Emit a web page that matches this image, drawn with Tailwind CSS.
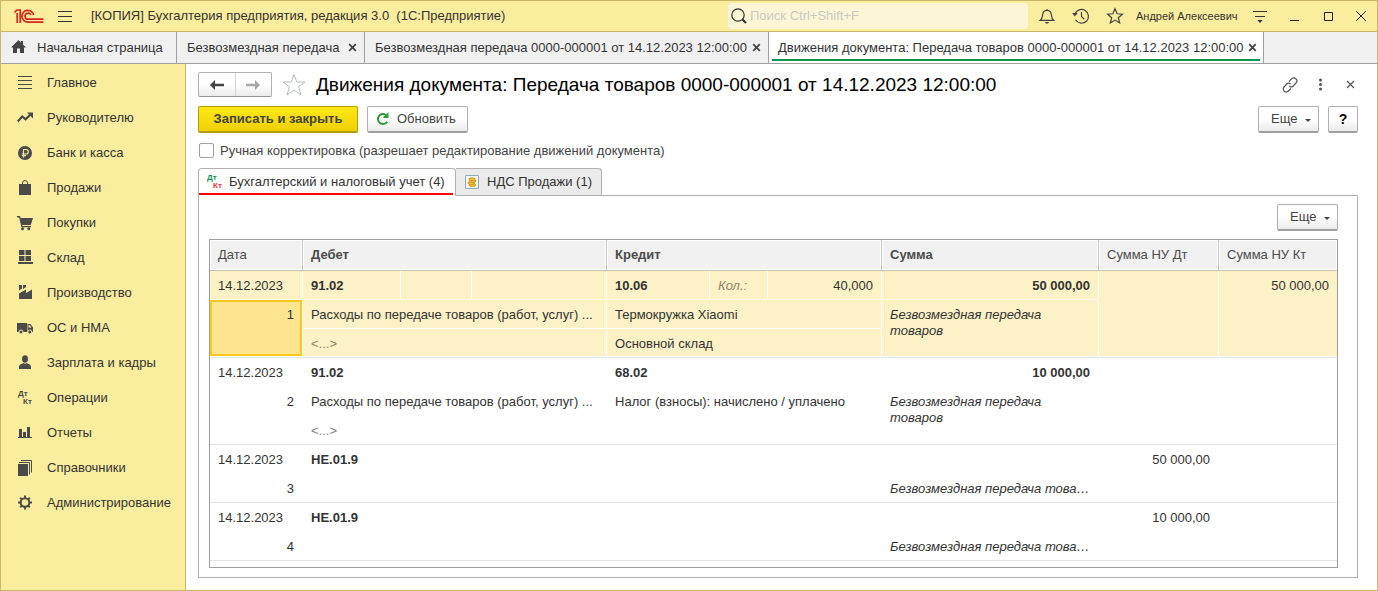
<!DOCTYPE html>
<html lang="ru">
<head>
<meta charset="utf-8">
<title>Движения документа</title>
<script src="https://cdn.jsdelivr.net/npm/@tailwindcss/browser@4"></script>
</head>
<body class="min-h-screen flex flex-col bg-white border border-[#c9b765] text-[13px] leading-4 text-[#333333]" style="font-family:'Liberation Sans',Arial,sans-serif">

<header class="flex items-center h-[31px] bg-[#fbed9e] border-b border-[#c9b765]">
  <svg class="ml-3 w-[31px] h-4 shrink-0" viewBox="0 0 31 16" fill="none" stroke="#d9251d" stroke-width="1.7" aria-label="1С">
    <path d="M1.5 4.4L4 2H7.2V15M4.2 15V5"/>
    <path d="M20.6 7A5.9 5.9 0 1 0 15 14.1H30.5"/>
    <path d="M17.8 7A3 3 0 1 0 15 11.2H30.5"/>
  </svg>
  <button class="ml-[13px] w-4 h-4 shrink-0" aria-label="Меню">
    <svg class="w-4 h-4" viewBox="0 0 16 16" fill="none" stroke="#333"><path d="M1 3.5H15M1 8.5H15M1 13.5H15"/></svg>
  </button>
  <div class="ml-[18px] whitespace-nowrap">[КОПИЯ] Бухгалтерия предприятия, редакция 3.0&nbsp; (1С:Предприятие)</div>
  <label class="ml-auto w-[300px] h-[26px] flex items-center gap-[2px] pl-[2px] bg-[#fdf6d6] rounded-sm">
    <svg class="w-[18px] h-[18px] shrink-0" viewBox="0 0 18 18" fill="none" stroke="#333"><circle cx="8" cy="8" r="6.2" stroke-width="1.2"/><path d="M12.5 12.5L16 16" stroke-width="2.2"/></svg>
    <input type="text" aria-label="Поиск" placeholder="Поиск Ctrl+Shift+F" class="flex-1 min-w-0 bg-transparent outline-none text-[13px] placeholder:text-[#c9c8c4]">
  </label>
  <button class="ml-[2px] w-[34px] h-[30px] flex items-center justify-center" aria-label="Уведомления">
    <svg class="w-[18px] h-[18px]" viewBox="0 0 18 18" fill="none" stroke="#444" stroke-width="1.2"><path d="M9 2V3.2M2.2 13.4H15.8C13.6 11.6 13.6 9.8 13.3 7.4C13 4.8 11.2 3.4 9 3.4S5 4.8 4.7 7.4C4.4 9.8 4.4 11.6 2.2 13.4Z"/><path d="M6.8 15H11.2L10 16.6H8Z" fill="#444" stroke="none"/></svg>
  </button>
  <button class="w-[34px] h-[30px] flex items-center justify-center" aria-label="История">
    <svg class="w-[18px] h-[18px]" viewBox="0 0 18 18" fill="none" stroke="#444" stroke-width="1.2"><path d="M3 7.2A6.9 6.9 0 1 1 3.6 12.8"/><path d="M9.5 5V9.6L12.3 12.3"/><path d="M.2 6L5.8 6L2.8 9.4Z" fill="#444" stroke="none"/></svg>
  </button>
  <button class="w-[34px] h-[30px] flex items-center justify-center" aria-label="Избранное">
    <svg class="w-[18px] h-[18px]" viewBox="0 0 18 18" fill="none" stroke="#444" stroke-width="1.2"><path d="M9 1.6L11.1 6.8L16.4 7.2L12.3 10.7L13.7 16L9 13.1L4.3 16L5.7 10.7L1.6 7.2L6.9 6.8Z"/></svg>
  </button>
  <span class="ml-1 w-[107px] text-[11px] whitespace-nowrap">Андрей Алексеевич</span>
  <button class="w-[34px] h-[30px] flex items-center justify-center" aria-label="Настройки">
    <svg class="w-4 h-4" viewBox="0 0 16 16" fill="none" stroke="#333"><path d="M1 3.5H15M3 8.5H13"/><path d="M5.4 12H10.6L8 14.9Z" fill="#333" stroke="none"/></svg>
  </button>
  <button class="w-[34px] h-[30px] flex items-center justify-center" aria-label="Свернуть">
    <svg class="w-3 h-3" viewBox="0 0 12 12" fill="none" stroke="#222"><path d="M2 10.5H11"/></svg>
  </button>
  <button class="w-[34px] h-[30px] flex items-center justify-center" aria-label="Развернуть">
    <svg class="w-3 h-3" viewBox="0 0 12 12" fill="none" stroke="#222"><path d="M2.5 2.5H10.5V10.5H2.5Z"/></svg>
  </button>
  <button class="w-8 h-[30px] flex items-center justify-center" aria-label="Закрыть">
    <svg class="w-3 h-3" viewBox="0 0 12 12" fill="none" stroke="#222"><path d="M1.2 1.2L10.8 10.8M10.8 1.2L1.2 10.8"/></svg>
  </button>
</header>

<nav class="flex h-8 bg-[#f0f0f0] border-b border-[#a0a0a0] whitespace-nowrap">
  <a href="#" class="w-[176px] flex items-center pl-[10px] gap-[11px] border-r border-[#a0a0a0]">
    <svg class="w-[15px] h-[15px]" viewBox="0 0 15 15" fill="#444"><path d="M7.5 0L0 7.5H2V13H6V8.5H9V13H13V7.5H15L12 4.5V1H10V2.5Z"/></svg>
    Начальная страница
  </a>
  <div class="w-[188px] flex items-center justify-between pl-[10px] pr-[7px] border-r border-[#a0a0a0]">
    <a href="#">Безвозмездная передача</a>
    <button aria-label="Закрыть вкладку"><svg class="w-[9px] h-[9px]" viewBox="0 0 9 9" stroke="#444" stroke-width="1.8"><path d="M1.2 1.2L7.8 7.8M7.8 1.2L1.2 7.8"/></svg></button>
  </div>
  <div class="w-[404px] flex items-center justify-between pl-[10px] pr-[7px] border-r border-[#a0a0a0]">
    <a href="#">Безвозмездная передача 0000-000001 от 14.12.2023 12:00:00</a>
    <button aria-label="Закрыть вкладку"><svg class="w-[9px] h-[9px]" viewBox="0 0 9 9" stroke="#444" stroke-width="1.8"><path d="M1.2 1.2L7.8 7.8M7.8 1.2L1.2 7.8"/></svg></button>
  </div>
  <div class="w-[495px] flex pl-[3px] pr-[3px] pb-[2px] bg-white border-r border-[#a0a0a0]">
    <div class="flex-1 flex items-center justify-between pl-[6px] pr-[3px] pt-1 border-b-2 border-[#0b9450]">
      <a href="#">Движения документа: Передача товаров 0000-000001 от 14.12.2023 12:00:00</a>
      <button aria-label="Закрыть вкладку"><svg class="w-[9px] h-[9px]" viewBox="0 0 9 9" stroke="#444" stroke-width="1.8"><path d="M1.2 1.2L7.8 7.8M7.8 1.2L1.2 7.8"/></svg></button>
    </div>
  </div>
</nav>

<div class="flex-1 flex">
  <aside class="w-[185px] shrink-0 bg-[#fbed9e] border-r border-[#c9b765] pt-px">
    <a href="#" class="h-[35px] flex items-center gap-[14px] pl-4"><svg class="w-4 h-4" viewBox="0 0 16 16" stroke="#4a4a4a"><path d="M1 1.5H15M1 5.5H15M1 9.5H15M1 13.5H15"/></svg>Главное</a>
    <a href="#" class="h-[35px] flex items-center gap-[14px] pl-4"><svg class="w-4 h-4" viewBox="0 0 16 16" fill="none" stroke="#4a4a4a" stroke-width="2.2"><path d="M.8 11.5L5.2 6.5L8.6 9.3L13.4 4.5"/><path d="M10 2.5H16V8.5Z" fill="#4a4a4a" stroke="none"/></svg>Руководителю</a>
    <a href="#" class="h-[35px] flex items-center gap-[14px] pl-4"><svg class="w-4 h-4" viewBox="0 0 16 16" fill="none"><circle cx="8" cy="8" r="7" fill="#4a4a4a"/><path d="M6.5 12.5V4.5H9A2.2 2.2 0 0 1 9 9H4.8M4.8 10.7H9" stroke="#fbed9e" stroke-width="1.2"/></svg>Банк и касса</a>
    <a href="#" class="h-[35px] flex items-center gap-[14px] pl-4"><svg class="w-4 h-4" viewBox="0 0 16 16" fill="#4a4a4a"><path d="M2 4H5V6H6V4H10V6H11V4H14V15H2Z"/><path d="M5.5 6V3Q5.500 .5 8 .5T10.5 3V6" fill="none" stroke="#4a4a4a"/></svg>Продажи</a>
    <a href="#" class="h-[35px] flex items-center gap-[14px] pl-4"><svg class="w-4 h-4" viewBox="0 0 16 16" fill="#4a4a4a"><path d="M0 1H3L3.6 3H16L13.8 10H5L5.4 11H14V12.2H4.4L2.2 2.5H0Z"/><circle cx="5.5" cy="13.7" r="1.5"/><circle cx="11.8" cy="13.7" r="1.5"/></svg>Покупки</a>
    <a href="#" class="h-[35px] flex items-center gap-[14px] pl-4"><svg class="w-4 h-4" viewBox="0 0 16 16" fill="#4a4a4a"><path d="M2 0H7.5V5H2ZM8.5 0H14V5H8.5ZM2 6H7.5V11H2ZM8.5 6H14V11H8.5ZM1 12H16V14H1Z"/></svg>Склад</a>
    <a href="#" class="h-[35px] flex items-center gap-[14px] pl-4"><svg class="w-4 h-4" viewBox="0 0 16 16" fill="#4a4a4a"><path d="M2 0H5V3.5L2 5.5ZM6 0H9V2L6 4ZM2 8.5L9 4.5V8L15 4.5V14H2Z"/></svg>Производство</a>
    <a href="#" class="h-[35px] flex items-center gap-[14px] pl-4"><svg class="w-4 h-4" viewBox="0 0 16 16" fill="#4a4a4a"><path d="M0 3H10V12H0ZM10.5 4H13.5L16 7.5V12H10.5Z"/><path d="M11.5 5.2H13L14.5 7.5H11.5Z" fill="#fbed9e"/><g stroke="#fbed9e"><circle cx="4" cy="12" r="2"/><circle cx="12.8" cy="12" r="2"/></g></svg>ОС и НМА</a>
    <a href="#" class="h-[35px] flex items-center gap-[14px] pl-4"><svg class="w-4 h-4" viewBox="0 0 16 16" fill="#4a4a4a"><ellipse cx="8" cy="4" rx="3" ry="3.7"/><path d="M2 14V11.500Q2 9.500 5 8.700L6.500 8.100Q8 9.500 9.500 8.100L11 8.700Q14 9.500 14 11.500V14Z"/></svg>Зарплата и кадры</a>
    <a href="#" class="h-[35px] flex items-center gap-[14px] pl-4"><svg class="w-4 h-4" viewBox="0 0 16 16" fill="#4a4a4a" font-size="8" font-weight="bold"><text x="1" y="6">Дт</text><text x="6" y="14">Кт</text></svg>Операции</a>
    <a href="#" class="h-[35px] flex items-center gap-[14px] pl-4"><svg class="w-4 h-4" viewBox="0 0 16 16" fill="#4a4a4a"><path d="M2 4H5V12H2ZM6 7H9V12H6ZM10 2H13V12H10ZM1 12H15V13H1Z"/></svg>Отчеты</a>
    <a href="#" class="h-[35px] flex items-center gap-[14px] pl-4"><svg class="w-4 h-4" viewBox="0 0 16 16" fill="#4a4a4a"><path d="M1 4H11V16H1Z"/><path d="M2 2.5H12.5V14.5M4 .5H14.5V12.5" fill="none" stroke="#4a4a4a"/></svg>Справочники</a>
    <a href="#" class="h-[35px] flex items-center gap-[14px] pl-4"><svg class="w-4 h-4" viewBox="0 0 16 16" fill="none" stroke="#4a4a4a" stroke-width="2"><circle cx="8" cy="7.500" r="4.300"/><path d="M8 .5V3.500M8 11.500V14.500M1 7.500H4M12 7.500H15M3.200 2.700L5 4.500M11 10.500L12.800 12.300M12.800 2.700L11 4.500M5 10.500L3.200 12.300"/></svg>Администрирование</a>
  </aside>

  <main class="flex-1 min-w-0 flex flex-col pl-3 pr-[19px] pb-3">
    <div class="flex items-center pt-2">
      <div class="flex w-[74px] h-[25px] rounded-xs border border-[#b0b0b0] border-b-[#949494] bg-linear-to-b from-white from-50% to-[#ebebeb]">
        <button class="flex-1 flex items-center justify-center border-r border-[#d4d4d4]" aria-label="Назад"><svg class="w-[14px] h-[10px]" viewBox="0 0 14 10" fill="#444"><path d="M5 0V3.8H14V6.2H5V10L0 5Z"/></svg></button>
        <button class="flex-1 flex items-center justify-center" aria-label="Вперед"><svg class="w-[14px] h-[10px]" viewBox="0 0 14 10" fill="#a8a8a8"><path d="M9 0L14 5L9 10V6.2H0V3.8H9Z"/></svg></button>
      </div>
      <button class="ml-[10px]" aria-label="В избранное"><svg class="w-6 h-6" viewBox="0 0 24 24" fill="none" stroke="#b4bbc4"><path d="M12 1.5L14.8 9H23L16.5 13.8L19 22L12 17L5 22L7.5 13.8L1 9H9.2Z"/></svg></button>
      <h1 class="ml-[10px] text-[19px] leading-6 text-black whitespace-nowrap">Движения документа: Передача товаров 0000-000001 от 14.12.2023 12:00:00</h1>
      <div class="ml-auto flex items-center gap-[14px]">
        <button aria-label="Ссылка"><svg class="w-4 h-4" viewBox="0 0 16 16" fill="none" stroke="#555" stroke-width="1.2"><path d="M7 4.500L9.600 1.900A2.700 2.700 0 0 1 14 6L11 9.200A2.700 2.700 0 0 1 7.300 9M9 11.500L6.500 14A2.700 2.700 0 0 1 2 10L5 6.800A2.700 2.700 0 0 1 8.700 7"/></svg></button>
        <button aria-label="Действия"><svg class="w-4 h-4" viewBox="0 0 16 16" fill="#555"><circle cx="8.5" cy="3" r="1.5"/><circle cx="8.5" cy="7.5" r="1.5"/><circle cx="8.5" cy="12" r="1.5"/></svg></button>
        <button aria-label="Закрыть"><svg class="w-4 h-4" viewBox="0 0 16 16" stroke="#555" stroke-width="1.2"><path d="M5 4L12 11M12 4L5 11"/></svg></button>
      </div>
    </div>

    <div class="flex pt-[9px] gap-[9px]">
      <button class="w-40 h-[27px] rounded-xs border border-[#b09c0c] border-b-2 bg-linear-to-b from-[#ffe815] to-[#f0d000] font-bold text-[#444]">Записать и закрыть</button>
      <button class="w-[101px] h-[27px] flex items-center gap-[7px] pl-2 rounded-xs border border-[#b0b0b0] border-b-2 border-b-[#a0a0a0] bg-linear-to-b from-white from-50% to-[#ebebeb] text-[#444]">
        <svg class="w-[14px] h-[14px]" viewBox="0 0 14 14" fill="none" stroke="#2f9e3a" stroke-width="2"><path d="M10 3A5 5 0 1 0 11.200 9.700"/><path d="M12.500 0V6H6.500Z" fill="#2f9e3a" stroke="none"/></svg>Обновить</button>
      <button class="ml-auto w-[61px] h-[27px] flex items-center gap-2 pl-3 rounded-xs border border-[#b0b0b0] border-b-2 border-b-[#a0a0a0] bg-linear-to-b from-white from-50% to-[#ebebeb] text-[#444]">Еще<svg class="mt-0.5 w-[6px] h-[3px]" viewBox="0 0 6 3" fill="#444"><path d="M0 0H6L3 3Z"/></svg></button>
      <button class="w-[30px] h-[27px] rounded-xs border border-[#b0b0b0] border-b-2 border-b-[#a0a0a0] bg-linear-to-b from-white from-50% to-[#ebebeb] font-bold text-[14px] text-black" aria-label="Справка">?</button>
    </div>

    <label class="flex items-center gap-[6px] pt-2 pl-px h-[27px] text-[#444]">
      <input type="checkbox" class="appearance-none w-[15px] h-[15px] border border-[#a0a0a0] rounded-xs bg-white">
      Ручная корректировка (разрешает редактирование движений документа)
    </label>

    <div class="flex pt-2 whitespace-nowrap">
      <button class="w-[258px] h-7 -mb-px relative z-10 bg-white border border-b-0 border-[#b0b0b0] rounded-t-sm pr-0.5 pb-px">
        <span class="flex items-center gap-[5px] h-full pl-2 pt-px border-b-2 border-[#ff0000]">
          <svg class="w-[17px] h-4" viewBox="0 0 17 16" font-size="8" font-weight="bold"><text x="0" y="6" fill="#0b9450">Дт</text><text x="6" y="14" fill="#e03c3c">Кт</text></svg>Бухгалтерский и налоговый учет (4)</span>
      </button>
      <button class="w-[146px] h-[27px] flex items-center gap-2 pl-[9px] bg-[#ebebeb] border border-l-0 border-b-0 border-[#b0b0b0] rounded-tr-sm">
        <svg class="w-[14px] h-[14px]" viewBox="0 0 14 14"><path d="M.5 .5H13.500V13.500H.5Z" fill="#f4f9fd" stroke="#8fa9bd"/><g fill="#f3c12d" stroke="#b98412" stroke-width=".6"><ellipse cx="7.500" cy="10" rx="3.500" ry="1.500"/><ellipse cx="6.300" cy="8" rx="3.500" ry="1.500"/><ellipse cx="7.500" cy="6" rx="3.500" ry="1.500"/><ellipse cx="7" cy="4.200" rx="3.200" ry="1.400"/></g></svg>НДС Продажи (1)</button>
    </div>

    <section class="flex-1 flex flex-col border border-[#b0b0b0] px-[10px] pt-2 pb-[9px]">
      <div class="flex justify-end pr-[9px]">
        <button class="w-[61px] h-[27px] flex items-center gap-2 pl-3 rounded-xs border border-[#b0b0b0] border-b-2 border-b-[#a0a0a0] bg-linear-to-b from-white from-50% to-[#ebebeb] text-[#444]">Еще<svg class="mt-0.5 w-[6px] h-[3px]" viewBox="0 0 6 3" fill="#444"><path d="M0 0H6L3 3Z"/></svg></button>
      </div>
      <div class="flex-1 mt-2 mr-[9px] border border-[#a0a0a0]">
        <table class="w-full table-fixed border-separate border-spacing-0 text-left whitespace-nowrap">
          <colgroup><col class="w-[93px]"><col class="w-[98px]"><col class="w-[71px]"><col class="w-[135px]"><col class="w-[103px]"><col class="w-[58px]"><col class="w-[114px]"><col><col class="w-[120px]"><col class="w-[118px]"></colgroup>
          <thead class="text-[#4c4c4c]">
            <tr class="h-[31px]">
              <th class="p-0 pl-2 font-normal bg-[#f1f1f1] border-r border-b border-[#c4c4c4] shadow-[inset_0_0_0_1px_white]">Дата</th>
              <th colspan="3" class="p-0 pl-2 bg-[#f1f1f1] border-r border-b border-[#c4c4c4] shadow-[inset_0_0_0_1px_white]">Дебет</th>
              <th colspan="3" class="p-0 pl-2 bg-[#f1f1f1] border-r border-b border-[#c4c4c4] shadow-[inset_0_0_0_1px_white]">Кредит</th>
              <th class="p-0 pl-2 bg-[#f1f1f1] border-r border-b border-[#c4c4c4] shadow-[inset_0_0_0_1px_white]">Сумма</th>
              <th class="p-0 pl-2 font-normal bg-[#f1f1f1] border-r border-b border-[#c4c4c4] shadow-[inset_0_0_0_1px_white]">Сумма НУ Дт</th>
              <th class="p-0 pl-2 font-normal bg-[#f1f1f1] border-b border-[#c4c4c4] shadow-[inset_0_0_0_1px_white]">Сумма НУ Кт</th>
            </tr>
          </thead>
          <tbody class="bg-[#fdf1c6]">
            <tr class="h-[29px]">
              <td class="p-0 pt-px pl-2 border-r border-b border-white">14.12.2023</td>
              <td class="p-0 pt-px pl-2 font-bold border-r border-b border-white">91.02</td>
              <td class="p-0 border-r border-b border-white"></td>
              <td class="p-0 border-r border-b border-white"></td>
              <td class="p-0 pt-px pl-2 font-bold border-r border-b border-white">10.06</td>
              <td class="p-0 pt-px pl-2 italic text-[#8c8668] border-r border-b border-white">Кол.:</td>
              <td class="p-0 pt-px pr-2 text-right border-r border-b border-white">40,000</td>
              <td class="p-0 pt-px pr-2 text-right font-bold border-r border-b border-white">50 000,00</td>
              <td rowspan="3" class="p-0 border-r border-r-white border-b border-b-[#e2e2e2] shadow-[inset_0_-1px_0_white]"></td>
              <td rowspan="3" class="p-0 pt-[7px] pr-2 align-top text-right border-b border-[#e2e2e2] shadow-[inset_0_-1px_0_white]">50 000,00</td>
            </tr>
            <tr class="h-[29px]">
              <td rowspan="2" class="p-0 h-[58px] align-top border-r border-r-white border-b border-b-[#e2e2e2] shadow-[inset_0_-1px_0_white]"><div class="h-14 pt-[5px] pr-[6px] text-right bg-[#ffe58f] border-2 border-[#f9c922]">1</div></td>
              <td colspan="3" class="p-0 pt-px pl-2 border-r border-b border-white">Расходы по передаче товаров (работ, услуг) ...</td>
              <td colspan="3" class="p-0 pt-px pl-2 border-r border-b border-white">Термокружка Xiaomi</td>
              <td rowspan="2" class="p-0 pt-[7px] pl-2 pr-10 align-top italic whitespace-normal border-r border-r-white border-b border-b-[#e2e2e2] shadow-[inset_0_-1px_0_white]">Безвозмездная передача товаров</td>
            </tr>
            <tr class="h-[29px]">
              <td colspan="3" class="p-0 pt-px pl-2 text-[#8c8668] border-r border-r-white border-b border-b-[#e2e2e2] shadow-[inset_0_-1px_0_white]">&lt;...&gt;</td>
              <td colspan="3" class="p-0 pt-px pl-2 border-r border-r-white border-b border-b-[#e2e2e2] shadow-[inset_0_-1px_0_white]">Основной склад</td>
            </tr>
          </tbody>
          <tbody>
            <tr class="h-[29px]">
              <td class="p-0 pl-2">14.12.2023</td>
              <td colspan="3" class="p-0 pl-2 font-bold">91.02</td>
              <td colspan="3" class="p-0 pl-2 font-bold">68.02</td>
              <td class="p-0 pr-[9px] text-right font-bold">10 000,00</td>
              <td rowspan="3" class="p-0 border-b border-[#e2e2e2]"></td>
              <td rowspan="3" class="p-0 border-b border-[#e2e2e2]"></td>
            </tr>
            <tr class="h-[29px]">
              <td rowspan="2" class="p-0 pt-[7px] pr-[9px] align-top text-right border-b border-[#e2e2e2]">2</td>
              <td colspan="3" class="p-0 pl-2">Расходы по передаче товаров (работ, услуг) ...</td>
              <td colspan="3" class="p-0 pl-2">Налог (взносы): начислено / уплачено</td>
              <td rowspan="2" class="p-0 pt-[7px] pl-2 pr-10 align-top italic whitespace-normal border-b border-[#e2e2e2]">Безвозмездная передача товаров</td>
            </tr>
            <tr class="h-[29px]">
              <td colspan="3" class="p-0 pt-px pl-2 text-[#808080] border-b border-[#e2e2e2]">&lt;...&gt;</td>
              <td colspan="3" class="p-0 border-b border-[#e2e2e2]"></td>
            </tr>
          </tbody>
          <tbody>
            <tr class="h-[29px]">
              <td class="p-0 pl-2">14.12.2023</td>
              <td colspan="3" class="p-0 pl-2 font-bold">НЕ.01.9</td>
              <td colspan="3" class="p-0"></td>
              <td class="p-0"></td>
              <td class="p-0 pr-[9px] text-right">50 000,00</td>
              <td class="p-0"></td>
            </tr>
            <tr class="h-[29px]">
              <td class="p-0 pt-px pr-[9px] text-right border-b border-[#e2e2e2]">3</td>
              <td colspan="3" class="p-0 border-b border-[#e2e2e2]"></td>
              <td colspan="3" class="p-0 border-b border-[#e2e2e2]"></td>
              <td class="p-0 pt-px pl-2 italic border-b border-[#e2e2e2]">Безвозмездная передача това…</td>
              <td class="p-0 border-b border-[#e2e2e2]"></td>
              <td class="p-0 border-b border-[#e2e2e2]"></td>
            </tr>
          </tbody>
          <tbody>
            <tr class="h-[29px]">
              <td class="p-0 pl-2">14.12.2023</td>
              <td colspan="3" class="p-0 pl-2 font-bold">НЕ.01.9</td>
              <td colspan="3" class="p-0"></td>
              <td class="p-0"></td>
              <td class="p-0 pr-[9px] text-right">10 000,00</td>
              <td class="p-0"></td>
            </tr>
            <tr class="h-[29px]">
              <td class="p-0 pt-px pr-[9px] text-right border-b border-[#e2e2e2]">4</td>
              <td colspan="3" class="p-0 border-b border-[#e2e2e2]"></td>
              <td colspan="3" class="p-0 border-b border-[#e2e2e2]"></td>
              <td class="p-0 pt-px pl-2 italic border-b border-[#e2e2e2]">Безвозмездная передача това…</td>
              <td class="p-0 border-b border-[#e2e2e2]"></td>
              <td class="p-0 border-b border-[#e2e2e2]"></td>
            </tr>
          </tbody>
        </table>
      </div>
    </section>
  </main>
</div>
</body>
</html>
